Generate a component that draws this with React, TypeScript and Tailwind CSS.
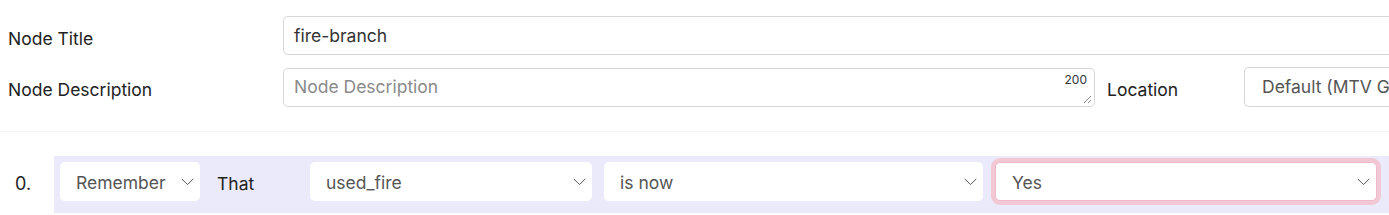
import React from 'react';

const Chevron = () => (
  <svg width="13" height="8" viewBox="0 0 13 8" fill="none" className="shrink-0">
    <polyline points="1,1.2 6.5,6.5 12,1.2" stroke="#555" strokeWidth="1" strokeLinecap="round" strokeLinejoin="round" />
  </svg>
);

function FakeSelect({ value, className }: { value: string; className: string }) {
  return (
    <div
      className={`h-[39px] shrink-0 flex items-center justify-between pl-4 pr-[6px] bg-white rounded-[5px] text-[17.5px] text-[#555] ${className}`}
    >
      <span className="pt-[3px]">{value}</span>
      <Chevron />
    </div>
  );
}

export default function App() {
  return (
    <div className="w-[1389px] h-[215px] overflow-hidden bg-white text-[#222] font-['Inter','Noto_Sans',sans-serif]">
      {/* Node meta */}
      <div className="pt-4 pl-2 flex flex-col gap-3">
        <div className="flex items-center">
          <label className="w-[275px] shrink-0 text-[17.5px] pt-[7px]">Node Title</label>
          <div className="w-[1130px] shrink-0 h-[39px] flex items-center px-[10px] pt-[2px] border border-[#d6d6d6] rounded-[5px] text-[17.5px] text-[#333]">
            fire-branch
          </div>
        </div>
        <div className="flex items-center">
          <label className="w-[275px] shrink-0 text-[17.5px] pt-[7px]">Node Description</label>
          <div className="relative w-[812px] shrink-0 h-[39px] flex items-center px-[10px] border border-[#d6d6d6] rounded-[5px] text-[17.5px] text-[#8a8a8a]">
            Node Description
            <span className="absolute right-[7px] top-[2px] text-[12px] text-[#333]">200</span>
            <svg width="9" height="9" viewBox="0 0 9 9" className="absolute right-[2px] bottom-[2px]">
              <line x1="1" y1="8" x2="8" y2="1" stroke="#888" strokeWidth="1" />
              <line x1="5" y1="8" x2="8" y2="5" stroke="#888" strokeWidth="1" />
            </svg>
          </div>
          <label className="ml-3 w-[137px] shrink-0 text-[17.5px] pt-[7px]">Location</label>
          <div className="w-[145px] shrink-0 h-[40px] flex items-center pl-[17px] border border-[#d6d6d6] border-r-0 rounded-l-[5px] text-[17.5px] text-[#555] whitespace-nowrap overflow-hidden">
            Default (MTV G
          </div>
        </div>
      </div>

      <div className="mt-6 h-px bg-[#f3f3f4]" />

      {/* Statement row */}
      <div className="mt-6 flex items-start">
        <div className="w-[54px] shrink-0 pl-[15px] pt-[14px] text-[18px] text-[#222]">0.</div>
        <div className="flex-1 bg-[#ebeafb] p-[6px] flex items-center pb-3">
          <FakeSelect value="Remember" className="w-[140px]" />
          <div className="w-[110px] shrink-0 pl-[17px] pt-[6px] text-[17.5px] text-[#222]">That</div>
          <FakeSelect value="used_fire" className="w-[282px]" />
          <FakeSelect value="is now" className="ml-3 w-[379px]" />
          <FakeSelect value="Yes" className="ml-3 w-[382px] ring-4 ring-[#f3c8d5] border border-[#f0b9c9]" />
        </div>
      </div>
    </div>
  );
}
